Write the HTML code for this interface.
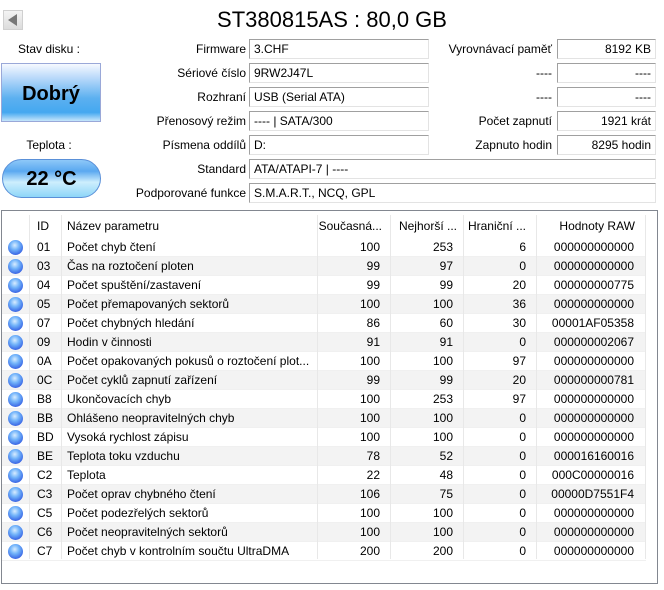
<!DOCTYPE html>
<html><head><meta charset="utf-8"><style>
*{margin:0;padding:0;box-sizing:border-box}
body{width:664px;height:590px;background:#fff;font-family:"Liberation Sans",sans-serif;font-size:12px;color:#000;position:relative;overflow:hidden}
.a{position:absolute;white-space:nowrap}
.lbl{position:absolute;text-align:right;white-space:nowrap;line-height:20px;top:0}
.box{position:absolute;height:20px;border-top:1px solid #a0a0a0;border-left:1px solid #a0a0a0;border-right:1px solid #e3e3e3;border-bottom:1px solid #e3e3e3;padding:0 4px;line-height:18px;white-space:nowrap}
.r{text-align:right}
#tbl{position:absolute;left:1px;top:210px;width:657px;height:374px;border:1px solid #828790}
.row{position:absolute;left:0;width:644px;height:19px;border-bottom:1px solid #f0f0f0;line-height:19px}
.row.g{background:#f3f3f3}
.c{position:absolute;top:0;height:19px;white-space:nowrap}
.sep{position:absolute;top:0;width:1px;background:#e8e8e8}
.dot{position:absolute;left:6px;top:2px;width:15px;height:15px;border-radius:50%;background:radial-gradient(circle at 45% 35%,#d8ecff 0%,#72b4fa 35%,#4070e8 70%,#5a3ac0 100%)}
</style></head><body>
<div class="a" style="left:3px;top:10px;width:20px;height:20px;background:linear-gradient(#f4f4f4,#dcdcdc);border:1px solid #d0d0d0"></div>
<div class="a" style="left:8px;top:14px;width:0;height:0;border-top:6px solid transparent;border-bottom:6px solid transparent;border-right:9px solid #777"></div>
<div class="a" style="left:0;width:664px;top:7px;text-align:center;font-size:22px">ST380815AS : 80,0 GB</div>

<div class="a" style="left:0;width:98px;top:42px;text-align:center">Stav disku :</div>
<div class="a" style="left:1px;top:63px;width:100px;height:59px;border:1px solid #9aa8d8;background:linear-gradient(#f6f9ff 0%,#b8d8fa 25%,#5cb0f0 60%,#44a8f0 85%,#c6e6fb 100%);text-align:center;line-height:60px;font-weight:bold;font-size:20px">Dobrý</div>
<div class="a" style="left:0;width:98px;top:138px;text-align:center">Teplota :</div>
<div class="a" style="left:2px;top:159px;width:99px;height:39px;border-radius:20px;border:1px solid #5a90d8;background:linear-gradient(#8ec8f8 0%,#5aa8f0 30%,#cdeefd 60%,#8ed6f8 100%);text-align:center;line-height:39px;font-weight:bold;font-size:20px">22 °C</div>

<div class="lbl" style="right:418px;top:39px">Firmware</div>
<div class="lbl" style="right:418px;top:63px">Sériové číslo</div>
<div class="lbl" style="right:418px;top:87px">Rozhraní</div>
<div class="lbl" style="right:418px;top:111px">Přenosový režim</div>
<div class="lbl" style="right:418px;top:135px">Písmena oddílů</div>
<div class="lbl" style="right:418px;top:159px">Standard</div>
<div class="lbl" style="right:418px;top:183px">Podporované funkce</div>
<div class="box" style="left:249px;top:39px;width:180px">3.CHF</div>
<div class="box" style="left:249px;top:63px;width:180px">9RW2J47L</div>
<div class="box" style="left:249px;top:87px;width:180px">USB (Serial ATA)</div>
<div class="box" style="left:249px;top:111px;width:180px">---- | SATA/300</div>
<div class="box" style="left:249px;top:135px;width:180px">D:</div>
<div class="box" style="left:249px;top:159px;width:407px">ATA/ATAPI-7 | ----</div>
<div class="box" style="left:249px;top:183px;width:407px">S.M.A.R.T., NCQ, GPL</div>

<div class="lbl" style="right:112px;top:39px">Vyrovnávací paměť</div>
<div class="lbl" style="right:112px;top:63px">----</div>
<div class="lbl" style="right:112px;top:87px">----</div>
<div class="lbl" style="right:112px;top:111px">Počet zapnutí</div>
<div class="lbl" style="right:112px;top:135px">Zapnuto hodin</div>
<div class="box r" style="left:557px;top:39px;width:99px">8192 KB</div>
<div class="box r" style="left:557px;top:63px;width:99px">----</div>
<div class="box r" style="left:557px;top:87px;width:99px">----</div>
<div class="box r" style="left:557px;top:111px;width:99px">1921 krát</div>
<div class="box r" style="left:557px;top:135px;width:99px">8295 hodin</div>

<div id="tbl">
<div class="row" style="top:4px;height:22px;line-height:22px;border:none">
<div class="c" style="left:35px">ID</div>
<div class="c" style="left:65px">Název parametru</div>
<div class="c" style="left:316px;width:64px;text-align:right">Současná...</div>
<div class="c" style="left:389px;width:66px;text-align:right">Nejhorší ...</div>
<div class="c" style="left:462px;width:62px;text-align:right">Hraniční ...</div>
<div class="c" style="left:535px;width:98px;text-align:right">Hodnoty RAW</div>
</div>
<div id="rows"></div>
<div class="sep" style="left:27px;top:4px;height:344px"></div>
<div class="sep" style="left:59px;top:4px;height:344px"></div>
<div class="sep" style="left:315px;top:4px;height:344px"></div>
<div class="sep" style="left:388px;top:4px;height:344px"></div>
<div class="sep" style="left:461px;top:4px;height:344px"></div>
<div class="sep" style="left:534px;top:4px;height:344px"></div>
<div class="sep" style="left:643px;top:4px;height:344px"></div>
</div>
<script>
var d=[["01","Počet chyb čtení",100,253,6,"000000000000"],["03","Čas na roztočení ploten",99,97,0,"000000000000"],["04","Počet spuštění/zastavení",99,99,20,"000000000775"],["05","Počet přemapovaných sektorů",100,100,36,"000000000000"],["07","Počet chybných hledání",86,60,30,"00001AF05358"],["09","Hodin v činnosti",91,91,0,"000000002067"],["0A","Počet opakovaných pokusů o roztočení plot...",100,100,97,"000000000000"],["0C","Počet cyklů zapnutí zařízení",99,99,20,"000000000781"],["B8","Ukončovacích chyb",100,253,97,"000000000000"],["BB","Ohlášeno neopravitelných chyb",100,100,0,"000000000000"],["BD","Vysoká rychlost zápisu",100,100,0,"000000000000"],["BE","Teplota toku vzduchu",78,52,0,"000016160016"],["C2","Teplota",22,48,0,"000C00000016"],["C3","Počet oprav chybného čtení",106,75,0,"00000D7551F4"],["C5","Počet podezřelých sektorů",100,100,0,"000000000000"],["C6","Počet neopravitelných sektorů",100,100,0,"000000000000"],["C7","Počet chyb v kontrolním součtu UltraDMA",200,200,0,"000000000000"]];
var h="";d.forEach(function(r,i){h+='<div class="row'+(i%2?' g':'')+'" style="top:'+(27+i*19)+'px"><div class="dot"></div><div class="c" style="left:35px">'+r[0]+'</div><div class="c" style="left:65px">'+r[1]+'</div><div class="c" style="left:316px;width:62px;text-align:right">'+r[2]+'</div><div class="c" style="left:389px;width:62px;text-align:right">'+r[3]+'</div><div class="c" style="left:462px;width:62px;text-align:right">'+r[4]+'</div><div class="c" style="left:535px;width:97px;text-align:right">'+r[5]+'</div></div>';});
document.getElementById("rows").innerHTML=h;
</script>
</body></html>
